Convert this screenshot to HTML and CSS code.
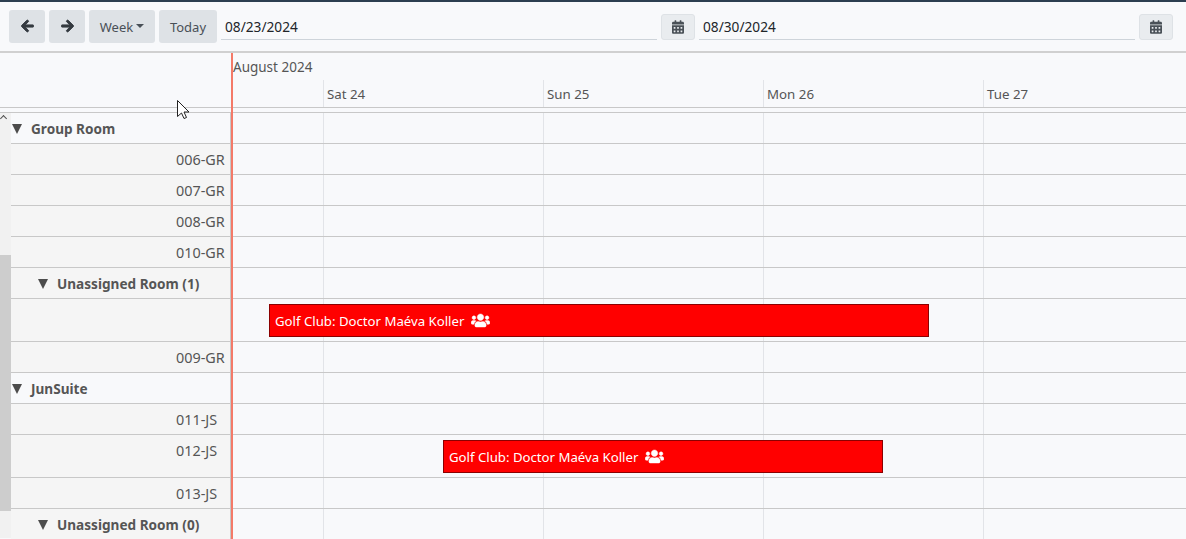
FILE: index.html
```html
<!DOCTYPE html>
<html lang="en">
<head>
<meta charset="utf-8">
<title>Scheduler</title>
<link rel="stylesheet" href="styles.css">
</head>
<body>
<header class="toolbar">
  <button class="btn nav"><svg class="arrow" width="13" height="14" viewBox="0 0 448 512"><path fill="currentColor" d="M257.5 445.1l-22.2 22.2c-9.4 9.4-24.6 9.4-33.9 0L7 273c-9.4-9.4-9.4-24.6 0-33.9L201.4 44.7c9.4-9.4 24.6-9.4 33.9 0l22.2 22.2c9.5 9.5 9.3 25-.4 34.3L136.6 216H424c13.3 0 24 10.7 24 24v32c0 13.3-10.7 24-24 24H136.600l120.500 114.800c9.800 9.300 10 24.800.4 34.300z"/></svg></button>
  <button class="btn nav"><svg class="arrow" width="13" height="14" viewBox="0 0 448 512"><path fill="currentColor" d="M190.500 66.900l22.200-22.200c9.400-9.400 24.600-9.400 33.900 0L441 239c9.400 9.400 9.400 24.600 0 33.900L246.600 467.300c-9.400 9.400-24.600 9.400-33.900 0l-22.200-22.200c-9.500-9.500-9.300-25 .4-34.300L311.400 296H24c-13.300 0-24-10.700-24-24v-32c0-13.300 10.700-24 24-24h287.400L190.900 101.200c-9.800-9.300-10-24.800-.4-34.300z"/></svg></button>
  <button class="btn week"><span>Week</span><span class="caret"></span></button>
  <button class="btn today"><span>Today</span></button>
  <div class="date-field"><span>08/23/2024</span></div>
  <button class="btn cal"><svg width="12" height="14" viewBox="0 0 448 512"><path fill="currentColor" d="M0 464c0 26.500 21.500 48 48 48h352c26.500 0 48-21.500 48-48V192H0v272zm320-196c0-6.600 5.400-12 12-12h40c6.600 0 12 5.400 12 12v40c0 6.600-5.400 12-12 12h-40c-6.600 0-12-5.400-12-12v-40zm0 128c0-6.600 5.400-12 12-12h40c6.600 0 12 5.400 12 12v40c0 6.600-5.400 12-12 12h-40c-6.600 0-12-5.400-12-12v-40zM192 268c0-6.600 5.400-12 12-12h40c6.600 0 12 5.400 12 12v40c0 6.600-5.400 12-12 12h-40c-6.600 0-12-5.400-12-12v-40zm0 128c0-6.600 5.400-12 12-12h40c6.600 0 12 5.400 12 12v40c0 6.600-5.400 12-12 12h-40c-6.600 0-12-5.400-12-12v-40zM64 268c0-6.600 5.400-12 12-12h40c6.600 0 12 5.400 12 12v40c0 6.600-5.400 12-12 12H76c-6.600 0-12-5.400-12-12v-40zm0 128c0-6.600 5.400-12 12-12h40c6.600 0 12 5.400 12 12v40c0 6.600-5.400 12-12 12H76c-6.600 0-12-5.400-12-12v-40zM400 64h-48V16c0-8.800-7.200-16-16-16h-32c-8.800 0-16 7.200-16 16v48H160V16c0-8.800-7.200-16-16-16h-32c-8.800 0-16 7.200-16 16v48H48C21.500 64 0 85.500 0 112v48h448v-48c0-26.500-21.500-48-48-48z"/></svg></button>
  <div class="date-field"><span>08/30/2024</span></div>
  <button class="btn cal"><svg width="12" height="14" viewBox="0 0 448 512"><path fill="currentColor" d="M0 464c0 26.500 21.500 48 48 48h352c26.500 0 48-21.500 48-48V192H0v272zm320-196c0-6.600 5.400-12 12-12h40c6.600 0 12 5.400 12 12v40c0 6.600-5.400 12-12 12h-40c-6.600 0-12-5.400-12-12v-40zm0 128c0-6.600 5.400-12 12-12h40c6.600 0 12 5.400 12 12v40c0 6.600-5.400 12-12 12h-40c-6.600 0-12-5.400-12-12v-40zM192 268c0-6.600 5.400-12 12-12h40c6.600 0 12 5.400 12 12v40c0 6.600-5.400 12-12 12h-40c-6.600 0-12-5.400-12-12v-40zm0 128c0-6.600 5.400-12 12-12h40c6.600 0 12 5.400 12 12v40c0 6.600-5.400 12-12 12h-40c-6.600 0-12-5.400-12-12v-40zM64 268c0-6.600 5.400-12 12-12h40c6.600 0 12 5.400 12 12v40c0 6.600-5.400 12-12 12H76c-6.600 0-12-5.400-12-12v-40zm0 128c0-6.600 5.400-12 12-12h40c6.600 0 12 5.400 12 12v40c0 6.600-5.400 12-12 12H76c-6.600 0-12-5.400-12-12v-40zM400 64h-48V16c0-8.800-7.200-16-16-16h-32c-8.800 0-16 7.200-16 16v48H160V16c0-8.800-7.200-16-16-16h-32c-8.800 0-16 7.200-16 16v48H48C21.500 64 0 85.500 0 112v48h448v-48c0-26.500-21.500-48-48-48z"/></svg></button>
</header>

<section class="timeline-head">
  <div class="head-side"></div>
  <div class="head-main">
    <div class="month">August 2024</div>
    <div class="days">
      <div class="day first"></div>
      <div class="day">Sat 24</div>
      <div class="day">Sun 25</div>
      <div class="day">Mon 26</div>
      <div class="day wide">Tue 27</div>
    </div>
  </div>
</section>

<section class="body">
  <div class="scrollbar"><span class="scroll-up"></span><div class="scroll-thumb"></div></div>
  <div class="grid">
    <div class="row group"><div class="label"><span class="tri"></span><b>Group Room</b></div><div class="track"></div></div>
    <div class="row room"><div class="label">006-GR</div><div class="track"></div></div>
    <div class="row room"><div class="label">007-GR</div><div class="track"></div></div>
    <div class="row room"><div class="label">008-GR</div><div class="track"></div></div>
    <div class="row room"><div class="label">010-GR</div><div class="track"></div></div>
    <div class="row sub"><div class="label"><span class="tri"></span><b>Unassigned Room (1)</b></div><div class="track"></div></div>
    <div class="row room tall"><div class="label"></div><div class="track">
      <div class="event ev1"><span>Golf Club: Doctor Maéva Koller</span><svg class="people" width="19" height="15" viewBox="0 0 640 512"><path fill="#fff" stroke="#fff" stroke-width="14" d="M96 224c35.300 0 64-28.700 64-64s-28.700-64-64-64-64 28.700-64 64 28.700 64 64 64zm448 0c35.300 0 64-28.700 64-64s-28.700-64-64-64-64 28.700-64 64 28.700 64 64 64zm32 32h-64c-17.600 0-33.500 7.100-45.100 18.600 40.300 22.100 68.900 62 75.100 109.400h66c17.700 0 32-14.300 32-32v-32c0-35.300-28.700-64-64-64zm-256 0c61.900 0 112-50.100 112-112S381.900 32 320 32 208 82.100 208 144s50.100 112 112 112zm76.800 32h-8.300c-20.800 10-43.900 16-68.500 16s-47.600-6-68.500-16h-8.300C179.600 288 128 339.600 128 403.200V432c0 26.500 21.500 48 48 48h288c26.500 0 48-21.500 48-48v-28.800c0-63.600-51.600-115.200-115.200-115.200zm-223.700-13.400C161.500 263.100 145.600 256 128 256H64c-35.300 0-64 28.700-64 64v32c0 17.700 14.300 32 32 32h65.900c6.300-47.400 34.900-87.300 75.200-109.400z"/></svg></div>
    </div></div>
    <div class="row room"><div class="label">009-GR</div><div class="track"></div></div>
    <div class="row group"><div class="label"><span class="tri"></span><b>JunSuite</b></div><div class="track"></div></div>
    <div class="row room"><div class="label">011-JS</div><div class="track"></div></div>
    <div class="row room tall"><div class="label top">012-JS</div><div class="track">
      <div class="event ev2"><span>Golf Club: Doctor Maéva Koller</span><svg class="people" width="19" height="15" viewBox="0 0 640 512"><path fill="#fff" stroke="#fff" stroke-width="14" d="M96 224c35.300 0 64-28.700 64-64s-28.700-64-64-64-64 28.700-64 64 28.700 64 64 64zm448 0c35.300 0 64-28.700 64-64s-28.700-64-64-64-64 28.700-64 64 28.700 64 64 64zm32 32h-64c-17.600 0-33.500 7.100-45.100 18.600 40.300 22.100 68.900 62 75.100 109.400h66c17.700 0 32-14.300 32-32v-32c0-35.300-28.700-64-64-64zm-256 0c61.900 0 112-50.100 112-112S381.900 32 320 32 208 82.100 208 144s50.100 112 112 112zm76.800 32h-8.300c-20.800 10-43.900 16-68.500 16s-47.600-6-68.500-16h-8.300C179.600 288 128 339.600 128 403.200V432c0 26.500 21.500 48 48 48h288c26.500 0 48-21.500 48-48v-28.800c0-63.600-51.600-115.200-115.200-115.200zm-223.700-13.400C161.500 263.100 145.600 256 128 256H64c-35.300 0-64 28.700-64 64v32c0 17.700 14.300 32 32 32h65.900c6.300-47.400 34.900-87.300 75.200-109.400z"/></svg></div>
    </div></div>
    <div class="row room"><div class="label">013-JS</div><div class="track"></div></div>
    <div class="row sub"><div class="label"><span class="tri"></span><b>Unassigned Room (0)</b></div><div class="track"></div></div>
  </div>
</section>
<div class="now-line"></div>
<svg class="cursor" width="16" height="22" viewBox="0 0 16 22"><path d="M1.500 1.500v16l4-3.500 2.500 5.500 2.500-1-2.500-5.500h5z" fill="#fff" stroke="#222" stroke-width="1"/></svg>
</body>
</html>
```
FILE: styles.css
```css
* { box-sizing: border-box; }
html, body { margin: 0; height: 539px; overflow: hidden; }
body {
  position: relative;
  background: #f8f9fb;
  border-top: 2px solid #2c3e50;
  font-family: "Noto Sans", "Open Sans", sans-serif;
  font-size: 13.5px;
  color: #555;
}
.toolbar {
  display: flex;
  align-items: center;
  height: 51px;
  padding: 8px 13px 9px 9px;
  gap: 4px;
  border-bottom: 2px solid #d0d0d0;
}
.btn {
  height: 33px;
  border: 0;
  border-radius: 3px;
  background: #dee2e6;
  color: #495057;
  font: inherit;
  font-size: 13px;
  display: flex;
  align-items: center;
  justify-content: center;
  padding: 0;
}
.btn > span:first-child { position: relative; top: 1px; }
.nav { width: 36px; color: #343a40; }
.arrow { stroke: currentColor; stroke-width: 36; }
.week { width: 66px; }
.today { width: 58px; }
.caret {
  border-top: 4px solid #495057;
  border-left: 4px solid transparent;
  border-right: 4px solid transparent;
  margin-left: 3px;
}
.cal {
  flex: none;
  align-self: flex-start;
  margin-top: 4px;
  width: 34px;
  height: 26px;
  background: #e9ecef;
  border: 1px solid #dee2e6;
  color: #495057;
}
.date-field {
  flex: 1;
  align-self: flex-start;
  height: 30px;
  border-bottom: 1px solid #ced4da;
  display: flex;
  align-items: center;
  padding: 3px 4px 0;
  color: #212529;
  font-size: 13.7px;
}
.timeline-head { display: flex; height: 55px; border-bottom: 1px solid #c8c8c8; }
.head-side { width: 232px; flex: none; }
.head-main { flex: 1; display: flex; flex-direction: column; }
.month { height: 27px; padding: 5px 0 0 1px; line-height: 18px; }
.days { display: flex; flex: 1; }
.day { width: 220px; flex: none; border-left: 1px solid #e2e4e8; padding: 4px 0 0 3px; line-height: 20px; font-size: 13.3px; }
.day.first { width: 91px; border-left: 0; }
.day.wide { flex: 1; }
.body { display: flex; border-top: 1px solid transparent; height: 430px; position: relative; }
.body::before {
  content: "";
  position: absolute;
  left: 0; right: 0; top: 3px;
  border-top: 1px solid #c8c8c8;
}
.scrollbar { width: 11px; flex: none; background: #f1f1f1; margin-top: 4px; position: relative; }
.scroll-up {
  position: absolute;
  left: 1px; top: 3px;
  width: 5px; height: 5px;
  border-left: 1.5px solid #505050;
  border-top: 1.5px solid #505050;
  transform: rotate(45deg);
}
.scroll-thumb { position: absolute; left: 0; right: 0; top: 142px; height: 256px; background: #cdcdcd; }
.grid { flex: 1; padding-top: 4px; }
.row { display: flex; height: 31px; border-bottom: 1px solid #c8c8c8; }
.row.tall { height: 43px; }
.label {
  width: 220px;
  flex: none;
  border-right: 1px solid #c8c8c8;
  background: #f5f5f5;
  display: flex;
  align-items: center;
  padding: 1px 0 0 165px;
  font-size: 14.4px;
}
.label.top { align-items: flex-start; padding-top: 6px; }
.group .label, .sub .label { font-size: 13.6px; }
.group .label { background: transparent; padding-left: 1px; }
.sub .label { padding-left: 27px; }
.tri {
  border-top: 10px solid #4c4c4c;
  border-left: 5.5px solid transparent;
  border-right: 5.5px solid transparent;
  margin-right: 9px;
}
.label b { font-weight: 700; }
.track {
  flex: 1;
  position: relative;
  background-image:
    linear-gradient(#e2e4e8, #e2e4e8),
    linear-gradient(#e2e4e8, #e2e4e8),
    linear-gradient(#e2e4e8, #e2e4e8),
    linear-gradient(#e2e4e8, #e2e4e8);
  background-size: 1px 100%;
  background-repeat: no-repeat;
  background-position: 92px 0, 312px 0, 532px 0, 752px 0;
}
.event {
  position: absolute;
  top: 5px;
  height: 33px;
  display: flex;
  align-items: center;
  padding-left: 5px;
  background: #ff0000;
  border: 1px solid #8b0000;
  color: #fff;
  font-size: 13.2px;
}
.ev1 { left: 38px; width: 660px; }
.ev2 { left: 212px; width: 440px; }
.people { margin-left: 7px; }
.now-line {
  position: absolute;
  left: 231px;
  top: 51px;
  bottom: 0;
  width: 2px;
  background: #f47a68;
}
.cursor { position: absolute; left: 176px; top: 97px; }
```
